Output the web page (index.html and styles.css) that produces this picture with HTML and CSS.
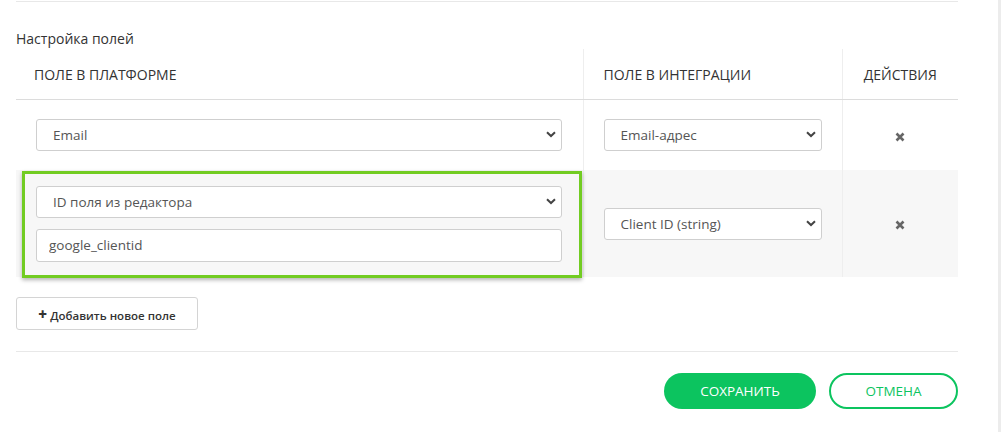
FILE: index.html
```html
<!DOCTYPE html>
<html lang="ru">
<head>
  <meta charset="UTF-8">
  <title>Настройка полей</title>
  <link rel="stylesheet" href="styles.css">
</head>
<body>
  <div class="page">
    <div class="rule top-rule"></div>
    <div class="section-title">Настройка полей</div>

    <table class="fields">
      <colgroup>
        <col class="col-platform">
        <col class="col-integration">
        <col class="col-actions">
      </colgroup>
      <thead>
        <tr>
          <th class="cell-platform">ПОЛЕ В ПЛАТФОРМЕ</th>
          <th class="cell-integration">ПОЛЕ В ИНТЕГРАЦИИ</th>
          <th class="cell-actions">ДЕЙСТВИЯ</th>
        </tr>
      </thead>
      <tbody>
        <tr class="row">
          <td class="cell-platform">
            <span class="select-wrap">
              <select class="field"><option>Email</option></select>
              <svg class="chevron" viewBox="0 0 10 7"><path d="M1 1.2 L5 5 L9 1.2" /></svg>
            </span>
          </td>
          <td class="cell-integration">
            <span class="select-wrap">
              <select class="field"><option>Email-адрес</option></select>
              <svg class="chevron" viewBox="0 0 10 7"><path d="M1 1.2 L5 5 L9 1.2" /></svg>
            </span>
          </td>
          <td class="cell-actions">
            <svg class="remove" viewBox="0 0 10 10"><path d="M1.5 1.5 L8.5 8.5 M8.5 1.5 L1.5 8.5" /></svg>
          </td>
        </tr>
        <tr class="row row-alt">
          <td class="cell-platform highlighted">
            <div class="stack">
              <span class="select-wrap">
                <select class="field"><option>ID поля из редактора</option></select>
                <svg class="chevron" viewBox="0 0 10 7"><path d="M1 1.2 L5 5 L9 1.2" /></svg>
              </span>
              <input class="field text-field" type="text" value="google_clientid">
            </div>
          </td>
          <td class="cell-integration">
            <span class="select-wrap">
              <select class="field"><option>Client ID (string)</option></select>
              <svg class="chevron" viewBox="0 0 10 7"><path d="M1 1.2 L5 5 L9 1.2" /></svg>
            </span>
          </td>
          <td class="cell-actions">
            <svg class="remove" viewBox="0 0 10 10"><path d="M1.5 1.5 L8.5 8.5 M8.5 1.5 L1.5 8.5" /></svg>
          </td>
        </tr>
      </tbody>
    </table>

    <div class="add-row">
      <button class="btn-add"><span class="plus">+</span> Добавить новое поле</button>
    </div>

    <div class="rule"></div>

    <div class="actions">
      <button class="btn btn-save">СОХРАНИТЬ</button>
      <button class="btn btn-cancel">ОТМЕНА</button>
    </div>
  </div>
  <div class="scroll-track"></div>
</body>
</html>
```

FILE: styles.css
```css
body {
  margin: 0;
  display: flex;
  height: 432px;
  overflow: hidden;
  background: #fff;
  font-family: "Open Sans", "Noto Sans", sans-serif;
  color: #333;
}
.page {
  flex: 1;
  min-width: 0;
  padding: 0 40px 0 16px;
}
.scroll-track {
  width: 3px;
  background: #ececec;
}
.rule {
  height: 1px;
  background: #e8e8e8;
}
.top-rule {
  margin-top: 1px;
}
.section-title {
  font-size: 14px;
  line-height: 20px;
  margin-top: 27px;
}

.fields {
  width: 942px;
  border-collapse: collapse;
  table-layout: fixed;
}
.col-platform { width: 567px; }
.col-integration { width: 259px; }
.col-actions { width: 116px; }

.fields th {
  height: 50px;
  padding: 0 20px;
  font-size: 14px;
  font-weight: 400;
  text-align: left;
  white-space: nowrap;
  border-bottom: 1px solid #dcdcdc;
}
.fields th.cell-platform {
  padding-left: 18px;
}
.fields td {
  padding: 0 20px 0 20px;
  vertical-align: middle;
}
.fields td.cell-platform {
  padding-right: 21px;
}
.fields .cell-integration,
.fields .cell-actions {
  border-left: 1px solid #eeeeee;
}
.fields .cell-actions {
  text-align: center;
  padding: 0;
}
.row td {
  height: 70px;
}
.row-alt td {
  height: 107px;
  background: #f7f7f7;
}
.highlighted {
  position: relative;
}
.highlighted::after {
  content: "";
  position: absolute;
  left: 6px;
  top: 1px;
  right: 1px;
  bottom: -1px;
  border: 3px solid #72cc22;
  box-shadow: 0 2px 4px rgba(0, 0, 0, 0.3);
  pointer-events: none;
}
.stack {
  display: flex;
  flex-direction: column;
  gap: 11px;
}

.select-wrap {
  position: relative;
  display: block;
}
.field {
  display: block;
  width: 100%;
  height: 32px;
  box-sizing: border-box;
  border: 1px solid #cfcfcf;
  border-radius: 3px;
  background: #fff;
  font-family: inherit;
  font-size: 13.5px;
  color: #555;
  padding: 0 28px 0 16px;
  appearance: none;
  -webkit-appearance: none;
  outline: none;
}
.text-field {
  height: 33px;
  padding-left: 12px;
}
.chevron {
  position: absolute;
  right: 6px;
  top: 12px;
  width: 10px;
  height: 7px;
  fill: none;
  stroke: #444;
  stroke-width: 2;
  pointer-events: none;
}
.remove {
  width: 10px;
  height: 10px;
  stroke: #666;
  stroke-width: 2.6;
  vertical-align: middle;
}

.add-row {
  padding: 20px 0 21px;
}
.btn-add {
  height: 33px;
  width: 182px;
  border: 1px solid #d4d4d4;
  border-radius: 3px;
  background: #fff;
  font-family: inherit;
  font-size: 11.5px;
  font-weight: 600;
  color: #333;
}
.plus {
  font-weight: 800;
  font-size: 15px;
}

.actions {
  display: flex;
  justify-content: flex-end;
  gap: 13px;
  padding-top: 21px;
}
.btn {
  height: 36px;
  border-radius: 18px;
  font-family: inherit;
  font-size: 13.5px;
  font-weight: 500;
}
.btn-save {
  width: 152px;
  border: none;
  background: #0cc45f;
  color: #fff;
}
.btn-cancel {
  width: 129px;
  border: 2px solid #0cc45f;
  background: #fff;
  color: #0cc45f;
}
```
